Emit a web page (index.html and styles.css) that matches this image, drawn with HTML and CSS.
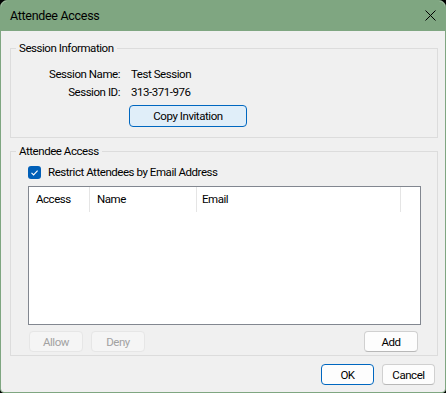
FILE: index.html
```html
<!DOCTYPE html>
<html lang="en">
<head>
    <meta charset="UTF-8">
    <title>Attendee Access</title>
    <link rel="stylesheet" href="styles.css">
</head>
<body>
    <div class="window">
        <div class="titlebar">
            <span class="title">Attendee Access</span>
            <button class="close" aria-label="Close">
                <svg width="11" height="11" viewBox="0 0 11 11"><path d="M0.5 0.5 L10.5 10.5 M10.5 0.5 L0.5 10.5" stroke="#000" stroke-width="1" fill="none"/></svg>
            </button>
        </div>
        <div class="content">
            <fieldset class="group session">
                <legend>Session Information</legend>
                <div class="info">
                    <span class="info-label">Session Name:</span>
                    <span class="info-value">Test Session</span>
                    <span class="info-label">Session ID:</span>
                    <span class="info-value">313-371-976</span>
                    <span></span>
                    <button class="btn btn-accent copy">Copy Invitation</button>
                </div>
            </fieldset>
            <fieldset class="group attendees">
                <legend>Attendee Access</legend>
                <label class="check">
                    <span class="box">
                        <svg width="13" height="13" viewBox="0 0 13 13"><path d="M3.5 6.8 L5.6 8.9 L9.6 4.6" stroke="#fff" stroke-width="1.1" fill="none"/></svg>
                    </span>
                    Restrict Attendees by Email Address
                </label>
                <div class="list">
                    <div class="list-head">
                        <div class="col col-access">Access</div>
                        <div class="col col-name">Name</div>
                        <div class="col col-email">Email</div>
                    </div>
                </div>
                <div class="list-actions">
                    <button class="btn" disabled>Allow</button>
                    <button class="btn" disabled>Deny</button>
                    <button class="btn push">Add</button>
                </div>
            </fieldset>
            <div class="dialog-actions">
                <button class="btn btn-accent">OK</button>
                <button class="btn">Cancel</button>
            </div>
        </div>
    </div>
</body>
</html>
```

FILE: styles.css
```css
:root {
    --frame-color: #7fa681;
    --face-color: #f0f0f0;
    --group-border: #dcdcdc;
    --accent: #0067c0;
    --text-color: #000000;
    --disabled-text: #a2a2a2;
}

* {
    margin: 0;
    padding: 0;
    box-sizing: border-box;
}

body {
    background: #000;
    font-family: Roboto, 'Liberation Sans', Arial, sans-serif;
    font-size: 11.5px;
    letter-spacing: -0.45px;
    line-height: 16px;
    color: var(--text-color);
}

.window {
    width: 446px;
    height: 393px;
    border: 1px solid var(--frame-color);
    border-radius: 7px 7px 4px 4px;
    background: var(--face-color);
    display: flex;
    flex-direction: column;
    overflow: hidden;
}

.titlebar {
    height: 30px;
    background: var(--frame-color);
    display: flex;
    align-items: center;
    padding-left: 9px;
}

.title {
    flex: 1;
    padding-bottom: 1px;
    font-size: 12.5px;
    letter-spacing: -0.3px;
}

.close {
    width: 11px;
    height: 11px;
    border: none;
    background: none;
    margin-right: 9px;
    margin-bottom: 1px;
    display: flex;
}

.content {
    flex: 1;
    padding: 9px 7px 0 9px;
}

.group {
    border: 1px solid var(--group-border);
    padding: 0;
    margin: 0;
}

.group legend {
    margin-left: 5px;
    padding: 0 3px;
}

.info {
    display: grid;
    grid-template-columns: 109px auto;
    column-gap: 11px;
    padding: 9px 0 10px;
}

.info-label {
    text-align: right;
    line-height: 18px;
}

.info-value {
    line-height: 18px;
}

.btn {
    font-family: inherit;
    font-size: inherit;
    letter-spacing: inherit;
    color: var(--text-color);
    height: 21px;
    width: 54px;
    background: #fdfdfd;
    border: 1px solid #d0d0d0;
    border-bottom-color: #b8b8b8;
    border-radius: 4px;
}

.btn:disabled {
    background: #f5f5f5;
    border-color: #e6e6e6;
    color: var(--disabled-text);
}

.btn-accent {
    border-color: var(--accent);
}

.copy {
    margin-top: 4px;
    margin-left: -2px;
    width: 118px;
    height: 22px;
    background: #e0eef9;
}

.attendees {
    margin-top: 5px;
}

.check {
    display: flex;
    align-items: center;
    gap: 7px;
    margin: 5px 0 0 17px;
}

.box {
    width: 13px;
    height: 13px;
    border-radius: 3px;
    background: #005fb8;
    display: flex;
}

.list {
    margin: 6px 16px 0 17px;
    height: 139px;
    background: #fff;
    border: 1px solid #828790;
}

.list-head {
    display: flex;
    height: 25px;
}

.col {
    border-right: 1px solid #e5e5e5;
    padding-left: 7px;
    line-height: 25px;
}

.col-access {
    width: 61px;
}

.col-name {
    width: 107px;
}

.col-email {
    width: 204px;
    padding-left: 5px;
}

.list-actions {
    display: flex;
    gap: 8px;
    margin-top: 6px;
    padding: 0 19px 3px 18px;
}

.push {
    margin-left: auto;
}

.dialog-actions {
    display: flex;
    justify-content: flex-end;
    gap: 8px;
    margin-top: 8px;
    padding-right: 3px;
}

.dialog-actions .btn {
    width: 53px;
}
```
